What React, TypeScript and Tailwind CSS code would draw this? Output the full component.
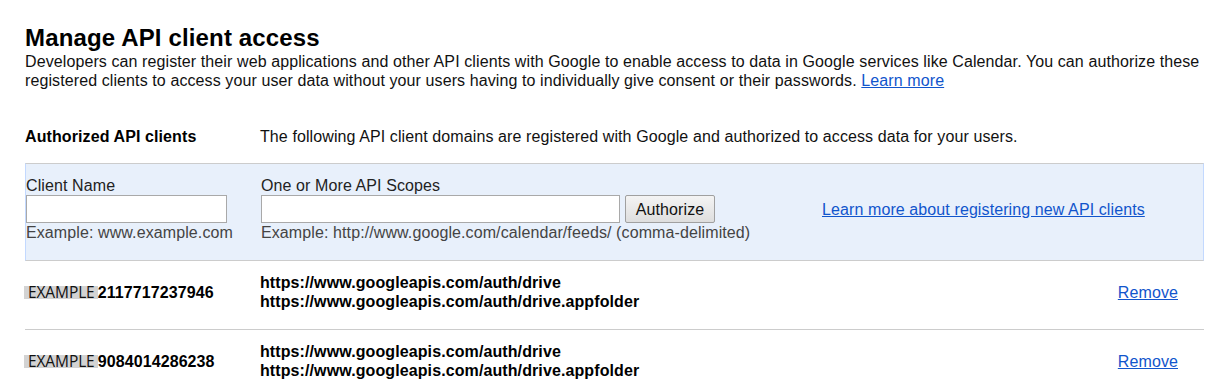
const scopes = [
  "https://www.googleapis.com/auth/drive",
  "https://www.googleapis.com/auth/drive.appfolder",
];

const clients = [
  { id: "2117717237946", scopes },
  { id: "9084014286238", scopes },
];

function ClientRow({ id, scopes }: { id: string; scopes: string[] }) {
  return (
    <div className="flex items-center border-b border-[#cccccc] pt-[13px] pb-[18px] last:border-b-0">
      <div className="flex w-[235px] items-center">
        <span className="-ml-px flex h-[13px] items-center bg-[#d3d3d3] pl-[4px] pr-[3px] font-['Open_Sans',sans-serif] text-[15.5px] leading-[13px] tracking-[-0.1px] text-[#111]">
          EXAMPLE
        </span>
        <span className="font-bold leading-[19px]">{id}</span>
      </div>
      <div className="flex-1 font-bold leading-[18.5px]">
        {scopes.map((s) => (
          <div key={s}>{s}</div>
        ))}
      </div>
      <a href="#" className="pr-[26px] leading-[19px] text-[#1155cc] underline">
        Remove
      </a>
    </div>
  );
}

export default function App() {
  return (
    <div className="min-h-[392px] bg-white px-[25px] pt-[23px] font-['Liberation_Sans',Arial,sans-serif] text-[16px] tracking-[0.1px] text-black">
      <h1 className="text-[24px] font-bold leading-[29px] tracking-[0.15px]">Manage API client access</h1>
      <p className="leading-[19px] text-[#111]">
        Developers can register their web applications and other API clients with Google to enable access to data in
        Google services like Calendar. You can authorize these registered clients to access your user data without your
        users having to individually give consent or their passwords.{" "}
        <a href="#" className="text-[#1155cc] underline">
          Learn more
        </a>
      </p>

      <div className="mt-[37px] flex leading-[19px]">
        <div className="w-[235px] font-bold">Authorized API clients</div>
        <div className="text-[#111]">
          The following API client domains are registered with Google and authorized to access data for your users.
        </div>
      </div>

      <div className="mt-[17px] flex items-center border-x border-t border-b border-x-[#c3d9ff] border-y-[#cccccc] bg-[#e8f0fb] pt-[12px] pb-[18px] leading-[19px]">
        <div className="w-[235px]">
          <div className="text-[#222]">Client Name</div>
          <input className="block h-[28px] w-[201px] border border-[#a9a9a9] bg-white" />
          <div className="text-[#444]">Example: www.example.com</div>
        </div>
        <div className="w-[561px]">
          <div className="text-[#222]">One or More API Scopes</div>
          <div className="flex gap-[5px]">
            <input className="block h-[28px] w-[359px] border border-[#a9a9a9] bg-white" />
            <button className="h-[28px] w-[90px] rounded-[2px] border border-[#a0a0a0] bg-gradient-to-b from-[#f4f4f4] to-[#dedede] text-[#111]">
              Authorize
            </button>
          </div>
          <div className="text-[#444]">Example: http://www.google.com/calendar/feeds/ (comma-delimited)</div>
        </div>
        <a href="#" className="text-[#1155cc] underline">
          Learn more about registering new API clients
        </a>
      </div>

      <div>
        {clients.map((c) => (
          <ClientRow key={c.id} id={c.id} scopes={c.scopes} />
        ))}
      </div>
    </div>
  );
}
